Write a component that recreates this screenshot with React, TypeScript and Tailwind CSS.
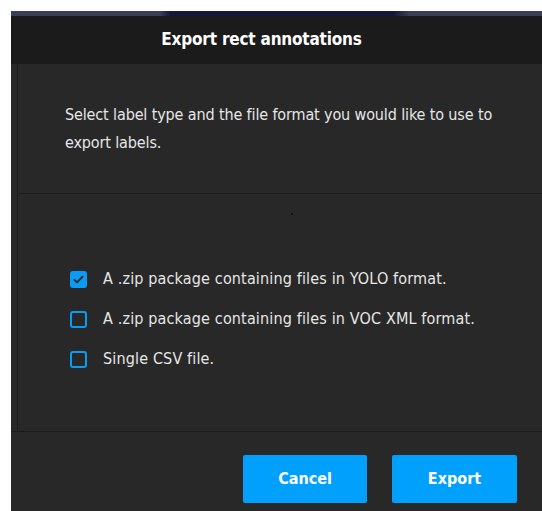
import { useState } from 'react';

const OPTIONS = [
  'A .zip package containing files in YOLO format.',
  'A .zip package containing files in VOC XML format.',
  'Single CSV file.',
];

const font = { fontFamily: '"DejaVu Sans Condensed", "Liberation Sans", sans-serif' };

function Checkbox({ checked }: { checked: boolean }) {
  return (
    <span
      className={`flex h-[17px] w-[17px] shrink-0 items-center justify-center rounded-[3px] border-2 border-[#0a9cf5] ${
        checked ? 'bg-[#0a9cf5]' : ''
      }`}
    >
      {checked && (
        <svg viewBox="0 0 16 16" className="h-[13px] w-[13px]" fill="none" stroke="#1f1f1f" strokeWidth="2.2" strokeLinecap="round" strokeLinejoin="round">
          <path d="M3 8.5l3.2 3L13 4.5" />
        </svg>
      )}
    </span>
  );
}

export default function App() {
  const [selected, setSelected] = useState(0);

  return (
    <div className="h-[511px] w-[542px] overflow-hidden bg-white pl-[11px] pt-[11px]" style={font}>
      <div className="flex h-[500px] w-[531px] flex-col bg-[#282828]">
        <div className="h-[5px] bg-[linear-gradient(90deg,#3b3e56_0%,#3b3e56_28%,#15163a_30%,#15163a_72%,#3b3e56_75%)]" />
        <div className="flex h-[48px] items-center justify-center bg-[#1b1b1b] pr-[30px]">
          <h1 className="text-[17px] font-bold tracking-[-0.2px] text-white">Export rect annotations</h1>
        </div>

        <div className="ml-[6px] flex h-[367px] flex-col border-l border-[#1c1c1c]">
          <div className="h-[130px] border-b border-[#1c1c1c] pl-[47px] pr-[24px] pt-[37px]">
            <p className="text-[16px] leading-[28px] tracking-[-0.13px] text-[#e6e6e6]">
              Select label type and the file format you would like to use to export labels.
            </p>
          </div>
          <div className="relative flex-1">
            <span className="absolute left-[273px] top-[19px] h-[2px] w-[2px] bg-[#111]" />
            <ul className="flex flex-col gap-[22px] pl-[52px] pt-[76px]">
              {OPTIONS.map((label, i) => (
                <li
                  key={label}
                  className="flex h-[18px] cursor-pointer items-center gap-[16px]"
                  onClick={() => setSelected(i)}
                >
                  <Checkbox checked={selected === i} />
                  <span className="text-[16px] leading-[18px] tracking-[0.15px] text-[#e6e6e6]">{label}</span>
                </li>
              ))}
            </ul>
          </div>
        </div>

        <div className="flex flex-1 items-start justify-end gap-[25px] border-t border-[#1c1c1c] pr-[25px] pt-[23px]">
          <button className="h-[48px] w-[124px] rounded-[2px] bg-[#02a0fd] text-[16px] font-bold text-white">Cancel</button>
          <button className="h-[48px] w-[125px] rounded-[2px] bg-[#02a0fd] text-[16px] font-bold text-white">Export</button>
        </div>
      </div>
    </div>
  );
}
